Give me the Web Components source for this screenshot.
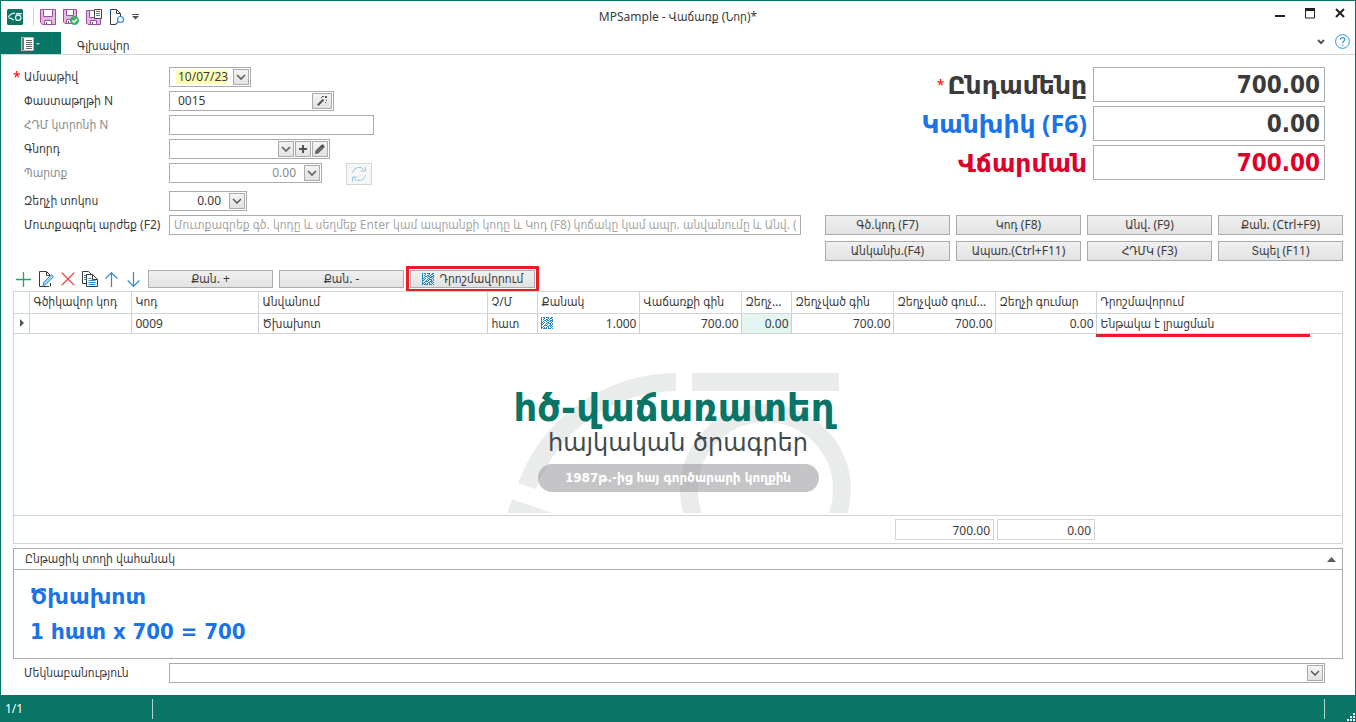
<!DOCTYPE html>
<html lang="hy">
<head>
<meta charset="utf-8">
<title>MPSample - Վաճառք (Նոր)*</title>
<style>
  body {
    margin: 0;
    --font: "Noto Sans", "DejaVu Sans Condensed", "DejaVu Sans", sans-serif;
    --label-font: "Noto Sans", "DejaVu Sans", sans-serif;
    --number-font: "DejaVu Sans Condensed", "DejaVu Sans", sans-serif;
    --brand: #087567;
    --text: #3b3b3b;
    --muted: #8c8c8c;
    --edge: #ababab;
    --rule: #d4d4d4;
    --blue: #1b73ea;
    --red: #dd0029;
    --mark: #ec1c24;
    font: 12px/20px var(--font);
    color: var(--text);
    background: #fff;
  }
</style>
</head>
<body>
<sale-window></sale-window>

<script>
const dots = [
  "101101110011", "100100010110", "101001101001", "100110110111",
  "101001001101", "110100110010", "101001011101", "110010100101",
  "100111001110", "101000110101", "110101010010", "101111011101"
].flatMap((row, y) => [...row].map((c, x) => c === "1" ? `M${x} ${y}h1v1h-1z` : "")).join("");

const ICONS = {
  app: [16, 16, `<rect width="16" height="16" rx="1.5" fill="#087567"/><g fill="none" stroke="#e6f3f1" stroke-width="1.3"><path d="M8 4.200C4.800 4.400 2.800 5.700 1.200 8M1.600 8.600c2 .4 3.800 1.100 5.200 2.400M8.800 4.600h6"/><circle cx="11.200" cy="8.700" r="2.700"/></g>`],
  save: [16, 16, `<path d="M.5.500h15v15H2.500l-2-2z" fill="#e3badf" stroke="#9c4f9c"/><path d="M3.500.500h9v7h-9z" fill="#fff" stroke="#9c4f9c"/><path d="M4.500 11.500h7v4h-7z" fill="#fff" stroke="#9c4f9c"/><path d="M6 13h1v2H6z" fill="#555"/>`],
  saveok: [16, 16, `<path d="M.5.500h13v14H2l-1.500-1.500z" fill="#e3badf" stroke="#9c4f9c"/><path d="M3.500.500h7v6h-7z" fill="#fff" stroke="#9c4f9c"/><path d="M3.500 10.500h5v4h-5z" fill="#fff" stroke="#9c4f9c"/><path d="M5 12h1v2H5z" fill="#555"/><circle cx="11.500" cy="11.500" r="4.500" fill="#3fae6a"/><path d="M9.300 11.500l1.700 1.800 3-3.300" fill="none" stroke="#fff" stroke-width="1.300"/>`],
  saveas: [16, 16, `<path d="M.5 1.500h14v14H2l-1.500-1.500z" fill="#e3badf" stroke="#9c4f9c"/><path d="M3.500 1.500h5v7h-5zM4.500 11.500h6v4h-6z" fill="#fff" stroke="#9c4f9c"/><path d="M8.500.500h7v9h-7z" fill="#fff" stroke="#444"/><path d="M10 2.500h4M10 4.500h4M10 6.500h4" stroke="#2e8ace"/><path d="M6 13h1v2H6z" fill="#555"/>`],
  preview: [16, 16, `<path d="M7 15.500H1.500V.500h6l4 4V7M7.500.500v4h4" fill="none" stroke="#3a3a3a"/><circle cx="11.500" cy="10.500" r="3" fill="#fff" stroke="#2e8ace" stroke-width="1.200"/><path d="M9.300 12.700L6.500 15.500" stroke="#2e8ace" stroke-width="1.400"/>`],
  more: [7, 6, `<path d="M0 0h7v1H0zM0 2h7L3.500 5.500z" fill="#555"/>`],
  file: [19, 14, `<path d="M.5.500h12v13H.5z" fill="#fff" stroke="#bbb"/><path d="M1 1h2v12H1z" fill="#777"/><path d="M5 3.500h6M5 5.500h6M5 7.500h6M5 9.500h6M5 11.500h6" stroke="#666"/><path d="M15 6h4l-2 2z" fill="#a9d0ca"/>`],
  min: [10, 12, `<path d="M0 7h10v2H0z" fill="#222"/>`],
  max: [10, 12, `<path d="M.5 1h9v9h-9z" fill="none" stroke="#222"/><path d="M0 0h10v3H0z" fill="#222"/>`],
  close: [10, 12, `<path d="M1 1l8 8M9 1l-8 8" stroke="#222" stroke-width="2"/>`],
  fold: [8, 6, `<path d="M1 1l3 3 3-3" fill="none" stroke="#555" stroke-width="2"/>`],
  help: [15, 15, `<circle cx="7.500" cy="7.500" r="6.900" fill="none" stroke="#2e95d3"/><path d="M5.300 5.800c0-3 4.500-2.800 4.500-.2 0 1.600-2.200 1.700-2.200 3.500M7.600 10.400v1.300" fill="none" stroke="#2e95d3" stroke-width="1.200"/>`],
  down: [10, 6, `<path d="M1 1l4 4 4-4" fill="none" stroke="#5f5f5f" stroke-width="1.600"/>`],
  plus: [8, 8, `<path d="M3 0h2v3h3v2H5v3H3V5H0V3h3z" fill="#555"/>`],
  pencil: [10, 10, `<path d="M0 10l.7-3.500L6.600.700Q7.400 0 8.300.800L9.300 1.800Q10 2.700 9.300 3.400L3.500 9.300z" fill="#555"/><path d="M2 8.300l5-5" stroke="#aaa" stroke-width=".7"/>`],
  wand: [10, 10, `<path d="M.8 9.200L6.500 3.500" stroke="#555" stroke-width="2"/><path d="M4 1h1v1H4zM6 0h1v1H6zM8 0h2v2H8zM9 4h1v1H9zM8 6h1v1H8zM5 0h1v1H5z" fill="#555"/>`],
  refresh: [16, 16, `<path d="M1.500 7A6.600 6.600 0 0 1 13.500 4.200M14.500 9A6.600 6.600 0 0 1 2.500 11.800M14.500.500v4.500H10M1.500 15.500V11H6" fill="none" stroke="#9ccbe8"/>`],
  add: [15, 15, `<path d="M7.500 0v15M0 7.500h15" stroke="#1aa85c" stroke-width="1.300"/>`],
  edit: [16, 16, `<path d="M11 15.500H1.500V.500h7l4 4M8.500.500v4h4M12.500 12v3.500" fill="none" stroke="#3a3a3a"/><path d="M5 15l1-4 7.500-7.500 2 2L8.500 13z" fill="#9ed0f0" stroke="#2e8ace" stroke-width=".9"/>`],
  del: [14, 14, `<path d="M.7.700l12.600 12.600M13.300.700L.7 13.300" stroke="#e84a48" stroke-width="1.300"/>`],
  copy: [16, 16, `<path d="M4 12.500H.5V.500h6l3 3" fill="none" stroke="#3a3a3a"/><path d="M4.500 3.500h6l5 5v7h-11z" fill="#fff" stroke="#3a3a3a"/><path d="M10.500 3.500v5h5" fill="none" stroke="#3a3a3a"/><path d="M2 4.500h2M2 6.500h2M2 8.500h2M6.500 7.500h3M6.500 9.500h7M6.500 11.500h7M6.500 13.500h7" stroke="#2e8ace"/>`],
  up: [15, 15, `<path d="M6.500.800V15M.7 6.500L6.500.700l5.800 5.800" fill="none" stroke="#2e8ace" stroke-width="1.200"/>`],
  dn: [15, 15, `<path d="M6.500 0v14.200M.7 8.500l5.800 5.800 5.800-5.800" fill="none" stroke="#2e8ace" stroke-width="1.200"/>`],
  matrix: [12, 12, `<path d="${dots}" fill="#2288cc" shape-rendering="crispEdges"/>`],
  marker: [4, 8, `<path d="M0 0l4 4-4 4z" fill="#555"/>`],
  collapse: [9, 5, `<path d="M0 5l4.500-5L9 5z" fill="#5a5a5a"/>`],
  grip: [8, 8, `<path d="M6 0h2v2H6zM3 3h2v2H3zM6 3h2v2H6zM0 6h2v2H0zM3 6h2v2H3zM6 6h2v2H6z" fill="#fff"/>`]
};

function define(name, markup) {
  const template = document.createElement("template");
  customElements.define(name, class extends HTMLElement {
    connectedCallback() {
      if (this.shadowRoot) return;
      template.innerHTML = typeof markup === "function" ? markup(this) : markup;
      this.attachShadow({ mode: "open" }).append(template.content.cloneNode(true));
    }
  });
}

define("ux-icon", el => {
  const [w, h, body] = ICONS[el.getAttribute("name")];
  return `<style>:host{display:inline-flex;flex:none}svg{display:block}</style>
    <svg width="${w}" height="${h}" viewBox="0 0 ${w} ${h}" aria-hidden="true">${body}</svg>`;
});

/* Flat icon button used in toolbars and window chrome */
define("ux-tool", el => `
  <style>
    :host{display:inline-flex}
    button{display:flex;align-items:center;justify-content:center;padding:0;border:0;background:none;cursor:pointer}
  </style>
  <button type="button" aria-label="${el.getAttribute("hint")}"><ux-icon name="${el.getAttribute("icon")}"></ux-icon></button>`);

/* Small square button inside an editor */
define("ux-mini", el => `
  <style>
    :host{display:flex}
    button{display:flex;align-items:center;justify-content:center;width:16px;padding:0;border:1px solid var(--edge);
      background:linear-gradient(#f3f3f3,#e2e2e2)}
    :host([wide]) button{width:20px}
  </style>
  <button type="button" aria-label="${el.getAttribute("hint")}"><ux-icon name="${el.getAttribute("icon")}"></ux-icon></button>`);

define("ux-button", `
  <style>
    :host{display:block}
    button{display:flex;align-items:center;justify-content:center;gap:6px;width:100%;height:20px;padding:0;
      border:1px solid var(--edge);background:linear-gradient(#f0f0f0,#e2e2e2);color:inherit;font:inherit;line-height:20px;white-space:nowrap}
    :host([slim]) button{height:18px;line-height:18px}
  </style>
  <button type="button"><slot></slot></button>`);

define("ux-field", el => {
  const a = n => el.getAttribute(n) || "";
  return `
  <style>
    :host{display:grid;grid-template-columns:11px 145px minmax(0,1fr);align-items:center}
    .req{color:#f00;font-size:14px}
    label{grid-column:2;white-space:nowrap}
    :host([dim]) label,:host([dim]) input{color:var(--muted)}
    .box{grid-column:3;display:flex;gap:1px;box-sizing:border-box;height:20px;width:${a("width") || "auto"};
      border:1px solid var(--edge);padding:1px;background:#fff}
    .view{display:flex;flex:1;min-width:0;align-items:center;padding:0 ${a("pad") || "7px"}}
    input{flex:1;min-width:0;width:100%;height:16px;padding:0;border:0;outline:0;background:none;font:inherit;line-height:16px;color:inherit}
    :host([right]) .view{padding:0 7px}
    :host([right]) input{text-align:right}
    :host([mark]) .view{padding:0 4px 0 5px}
    :host([mark]) input{background:#ffffb3;padding-left:2px;height:14px}
    input::placeholder{color:#a6a6a6;opacity:1}
  </style>
  ${el.hasAttribute("required") ? '<span class="req">*</span>' : ""}
  <label for="f">${a("label")}</label>
  <div class="box"><div class="view"><input id="f" type="text" value="${a("value")}" placeholder="${a("hint")}"></div><slot></slot></div>`;
});

define("ux-combo", el => `
  <style>
    :host{display:grid;grid-template-columns:156px minmax(0,1fr)}
    label{padding-left:11px}
    .box{display:grid;box-sizing:border-box;height:20px;border:1px solid var(--edge);padding:1px}
    select,.arrow{grid-area:1/1}
    select{appearance:none;border:0;padding:0 20px 0 7px;background:none;font:inherit;line-height:16px;color:inherit}
    .arrow{justify-self:end;display:flex;align-items:center;justify-content:center;width:14px;border:1px solid var(--edge);
      background:linear-gradient(#f3f3f3,#e2e2e2);pointer-events:none}
  </style>
  <label for="s">${el.getAttribute("label")}</label>
  <div class="box"><select id="s"><option></option></select><span class="arrow"><ux-icon name="down"></ux-icon></span></div>`);

define("sale-total", el => `
  <style>
    :host{display:grid;grid-template-columns:1fr 232px;gap:6px;align-items:center;color:${el.getAttribute("tone")}}
    label{display:flex;align-items:center;justify-content:flex-end;gap:3px;font:700 25px/35px var(--label-font);white-space:nowrap}
    .req{color:#f00;font:400 14px/20px var(--font)}
    input{box-sizing:border-box;width:100%;height:35px;border:1px solid var(--edge);padding:1px 4px 0;text-align:right;
      font:700 24px/32px var(--number-font);color:${el.getAttribute("ink")}}
  </style>
  <label for="t">${el.hasAttribute("required") ? '<span class="req">*</span>' : ""}${el.getAttribute("label")}</label>
  <input id="t" type="text" value="${el.getAttribute("value")}">`);

define("title-bar", `
  <style>
    :host{display:grid;grid-template-columns:1fr auto 1fr;align-items:center;height:31px;padding:0 10px 0 6px}
    .quick{display:flex;align-items:center;gap:7px}
    .sep{width:1px;height:19px;margin:0 -1px 0 3px;background:var(--rule)}
    .win{display:flex;justify-content:flex-end;gap:20px;padding-bottom:6px}
    h1{margin:0;padding-left:4px;font:inherit}
  </style>
  <div class="quick">
    <ux-icon name="app"></ux-icon><span class="sep"></span>
    <ux-tool icon="save" hint="Save"></ux-tool><ux-tool icon="saveok" hint="Save and close"></ux-tool>
    <ux-tool icon="saveas" hint="Save as"></ux-tool><ux-tool icon="preview" hint="Preview"></ux-tool>
    <ux-tool icon="more" hint="More"></ux-tool>
  </div>
  <h1>MPSample - Վաճառք (Նոր)*</h1>
  <div class="win"><ux-tool icon="min" hint="Minimize"></ux-tool><ux-tool icon="max" hint="Maximize"></ux-tool><ux-tool icon="close" hint="Close"></ux-tool></div>`);

define("ribbon-bar", `
  <style>
    :host{display:flex;align-items:center;height:22px;border-bottom:1px solid var(--rule);padding-right:5px}
    .file{width:60px;height:22px;display:flex;align-items:center;justify-content:center;border:0;padding:2px 2px 0 0;background:var(--brand)}
    .tab{flex:1;padding:6px 0 0 16px}
    .tab a{color:inherit;text-decoration:none}
    .end{display:flex;align-items:center;gap:10px;padding-bottom:3px}
  </style>
  <button class="file" type="button" aria-label="File"><ux-icon name="file"></ux-icon></button>
  <nav class="tab"><a href="#main">Գլխավոր</a></nav>
  <div class="end"><ux-tool icon="fold" hint="Collapse"></ux-tool><ux-tool icon="help" hint="Help"></ux-tool></div>`);

define("sale-header", `
  <style>
    :host{display:flex;flex-direction:column;gap:4px}
    .top{display:flex;justify-content:space-between}
    .fields,.totals{display:flex;flex-direction:column;gap:4px}
    .totals{padding-right:18px}
    .debt{display:flex;align-items:flex-start;gap:24px;height:24px}
    .debt button{width:26px;height:22px;padding:0;border:1px solid #d6d6d6;background:#f6f6f6;display:flex;align-items:center;justify-content:center}
    .entry{display:flex;align-items:flex-start;gap:24px}
    .entry ux-field{flex:1}
    .keys{display:grid;grid-template-columns:repeat(4,125px);gap:6px}
  </style>
  <div class="top">
    <div class="fields">
      <ux-field required mark label="Ամսաթիվ" value="10/07/23" width="82px"><ux-mini icon="down" hint="Calendar"></ux-mini></ux-field>
      <ux-field label="Փաստաթղթի N" value="0015" width="165px"><ux-mini wide icon="wand" hint="Generate"></ux-mini></ux-field>
      <ux-field dim label="ՀԴՄ կտրոնի N" width="205px"></ux-field>
      <ux-field label="Գնորդ" width="161px"><ux-mini icon="down" hint="Open"></ux-mini><ux-mini icon="plus" hint="Add"></ux-mini><ux-mini icon="pencil" hint="Edit"></ux-mini></ux-field>
      <div class="debt">
        <ux-field dim right label="Պարտք" value="0.00" width="153px"><ux-mini icon="down" hint="Open"></ux-mini></ux-field>
        <button type="button" disabled aria-label="Refresh"><ux-icon name="refresh"></ux-icon></button>
      </div>
      <ux-field right label="Զեղչի տոկոս" value="0.00" width="78px"><ux-mini icon="down" hint="Open"></ux-mini></ux-field>
    </div>
    <div class="totals">
      <sale-total required label="Ընդամենը" value="700.00" tone="var(--text)" ink="var(--text)"></sale-total>
      <sale-total label="Կանխիկ (F6)" value="0.00" tone="var(--blue)" ink="var(--text)"></sale-total>
      <sale-total label="Վճարման" value="700.00" tone="var(--red)" ink="var(--red)"></sale-total>
    </div>
  </div>
  <div class="entry">
    <ux-field label="Մուտքագրել արժեք (F2)" pad="3px" hint="Մուտքագրեք գծ. կոդը և սեղմեք Enter կամ ապրանքի կոդը և Կոդ (F8) կոճակը կամ ապր. անվանումը և Անվ. ("></ux-field>
    <div class="keys">
      <ux-button>Գծ.կոդ (F7)</ux-button><ux-button>Կոդ (F8)</ux-button><ux-button>Անվ. (F9)</ux-button><ux-button>Քան. (Ctrl+F9)</ux-button>
      <ux-button>Անկանխ.(F4)</ux-button><ux-button>Ապառ.(Ctrl+F11)</ux-button><ux-button>ՀԴՄԿ (F3)</ux-button><ux-button>Տպել (F11)</ux-button>
    </div>
  </div>`);

define("row-toolbar", `
  <style>
    :host{display:flex;align-items:center;gap:6px;height:22px;padding-left:3px}
    .icons{display:flex;align-items:center;gap:7px}
    ux-button{width:125px}
    .mark{outline:3px solid var(--mark);outline-offset:1px}
  </style>
  <div class="icons">
    <ux-tool icon="add" hint="Add row"></ux-tool><ux-tool icon="edit" hint="Edit row"></ux-tool><ux-tool icon="del" hint="Delete row"></ux-tool>
    <ux-tool icon="copy" hint="Copy row"></ux-tool><ux-tool icon="up" hint="Move up"></ux-tool><ux-tool icon="dn" hint="Move down"></ux-tool>
  </div>
  <ux-button slim>Քան. +</ux-button><ux-button slim>Քան. -</ux-button>
  <ux-button slim class="mark"><ux-icon name="matrix"></ux-icon>Դրոշմավորում</ux-button>`);

define("brand-mark", `
  <style>
    :host{display:grid;justify-items:center;width:345px;height:140px}
    svg,.words{grid-area:1/1}
    .words{display:flex;flex-direction:column;align-items:center;white-space:nowrap;font-family:"DejaVu Sans",sans-serif}
    .name{padding-top:14px;font-size:37px;line-height:44px;font-weight:700;color:#087567;margin-right:8px}
    .sub{font-size:24px;line-height:24px;color:#3f4a4c}
    .pill{box-sizing:border-box;width:281px;height:28px;margin-top:9px;border-radius:14px;background:rgba(140,140,144,.5);
      color:#fff;text-align:center;font:700 12px/28px "DejaVu Sans",sans-serif}
  </style>
  <svg width="345" height="140" viewBox="0 0 345 140" aria-hidden="true">
    <g fill="#eaecec"><path d="M170 0v18A150.500 150.500 0 0 0 30 116L12 110A168.500 168.500 0 0 1 170 0zM186 0h147v18H186zM6 126l40 14H1z"/></g>
    <circle cx="259.500" cy="116.500" r="76.500" fill="none" stroke="#eaecec" stroke-width="18"/>
  </svg>
  <div class="words"><div class="name">հծ-վաճառատեղ</div><div class="sub">հայկական ծրագրեր</div><div class="pill">1987թ.-ից հայ գործարարի կողքին</div></div>`);

define("sale-grid", `
  <style>
    :host{display:flex;flex-direction:column;border:1px solid var(--rule);min-height:250px}
    table{width:100%;border-collapse:collapse;table-layout:fixed}
    th,td{box-sizing:border-box;padding:0 4px;border-right:1px solid var(--rule);border-bottom:1px solid var(--rule);font-weight:400;text-align:left;
      line-height:19px;height:20px;white-space:nowrap;overflow:hidden;text-overflow:ellipsis}
    th{height:21px;line-height:20px}
    td{border-right-color:#c3cede}
    th:last-child,td:last-child{border-right:0}
    td.n{text-align:right;padding-right:2px}
    td.q{padding-left:3px}
    td.tint{background:#e2f5f1}
    .qty{display:flex;align-items:center;justify-content:space-between}
    td.st{padding:0 4px 0 6px}
    .st ux-icon{display:flex}
    .area{flex:1;display:flex;flex-direction:column;align-items:center;justify-content:space-between;overflow:hidden}
    .under{align-self:flex-end;display:flex;width:calc(100% - 1082px)}
    .under i{width:214px;height:3px;background:var(--mark)}
    brand-mark{margin-bottom:2px}
    .sum{display:grid;grid-template-columns:99px 98px;gap:3px;padding:3px 0 3px 881px;border-top:1px solid var(--rule)}
    output{box-sizing:border-box;height:21px;border:1px solid var(--rule);text-align:right;padding-right:3px;line-height:21px}
  </style>
  <table>
    <colgroup><col style="width:15px"><col style="width:102px"><col style="width:127px"><col style="width:229px"><col style="width:50px"><col style="width:102px"><col style="width:102px"><col style="width:50px"><col style="width:102px"><col style="width:102px"><col style="width:101px"><col></colgroup>
    <thead><tr><th></th><th>Գծիկավոր կոդ</th><th>Կոդ</th><th>Անվանում</th><th>Չ/Մ</th><th>Քանակ</th><th>Վաճառքի գին</th><th>Զեղչ...</th><th>Զեղչված գին</th><th>Զեղչված գում...</th><th>Զեղչի գումար</th><th>Դրոշմավորում</th></tr></thead>
    <tbody><tr><td class="st"><ux-icon name="marker"></ux-icon></td><td></td><td>0009</td><td>Ծխախոտ</td><td>հատ</td><td class="n q"><div class="qty"><ux-icon name="matrix"></ux-icon><span>1.000</span></div></td><td class="n">700.00</td><td class="n tint">0.00</td><td class="n">700.00</td><td class="n">700.00</td><td class="n">0.00</td><td>Ենթակա է լրացման</td></tr></tbody>
  </table>
  <div class="area"><div class="under"><i></i></div><brand-mark></brand-mark></div>
  <div class="sum"><output>700.00</output><output>0.00</output></div>`);

define("row-panel", `
  <style>
    :host{display:block;border:1px solid var(--edge)}
    header{display:flex;align-items:center;justify-content:space-between;height:20px;padding:0 6px 0 11px;border-bottom:1px solid var(--edge)}
    h2{margin:0;font:inherit;line-height:22px}
    .body{padding:9px 16px;font:700 22px/35px var(--number-font);color:var(--blue)}
    p{margin:0}
    span{font-family:"DejaVu Sans",sans-serif}
  </style>
  <header><h2>Ընթացիկ տողի վահանակ</h2><ux-tool icon="collapse" hint="Collapse panel"></ux-tool></header>
  <div class="body"><p><span>Ծխախոտ</span></p><p>1 <span>հատ</span> x 700 = 700</p></div>`);

define("status-bar", `
  <style>
    :host{display:flex;align-items:center;height:27px;background:var(--brand);color:#fff}
    .pos{box-sizing:border-box;width:152px;padding-left:4px;border-right:1px solid #b5d5d1}
    .fill{flex:1;height:20px;border-right:1px solid #b5d5d1}
    .grip{display:flex;align-self:flex-end;justify-content:flex-end;width:30px;padding-bottom:1px}
  </style>
  <span class="pos">1/1</span><span class="fill"></span><span class="grip"><ux-icon name="grip"></ux-icon></span>`);

define("sale-window", `
  <style>
    :host{display:flex;flex-direction:column;box-sizing:border-box;min-height:100vh;border:1px solid var(--brand);border-bottom:0}
    main{flex:1;display:flex;flex-direction:column;padding:12px 12px}
    row-toolbar{margin:7px 0 1px}
    sale-grid{flex:1}
    row-panel{margin:4px 0}
    ux-combo{padding-right:18px}
  </style>
  <title-bar></title-bar>
  <ribbon-bar></ribbon-bar>
  <main id="main">
    <sale-header></sale-header>
    <row-toolbar></row-toolbar>
    <sale-grid></sale-grid>
    <row-panel></row-panel>
    <ux-combo label="Մեկնաբանություն"></ux-combo>
  </main>
  <status-bar></status-bar>`);
</script>
</body>
</html>
